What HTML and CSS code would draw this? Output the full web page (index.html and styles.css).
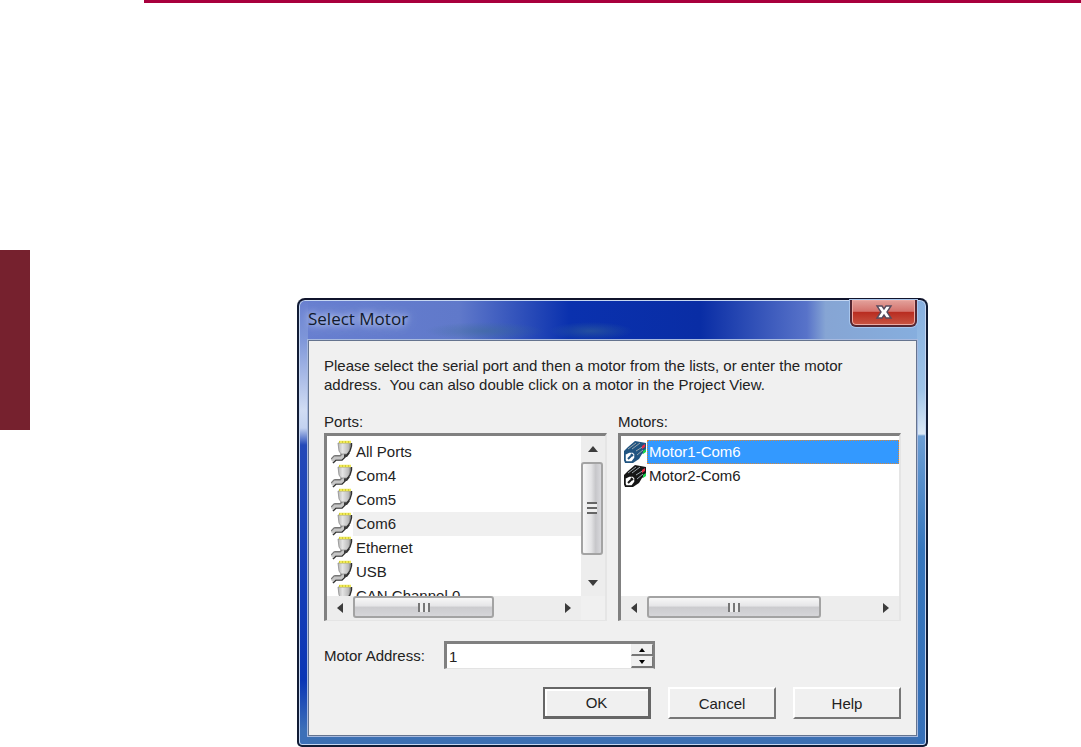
FILE: index.html
```html
<!DOCTYPE html>
<html lang="en">
<head>
<meta charset="utf-8">
<title>Select Motor</title>
<link rel="stylesheet" href="styles.css">
</head>
<body>
<svg class="defs" aria-hidden="true">
  <defs>
    <linearGradient id="metal"><stop offset="0" stop-color="#b5b5b5"/><stop offset=".35" stop-color="#e4e4e4"/><stop offset=".8" stop-color="#bcbcbc"/><stop offset="1" stop-color="#777"/></linearGradient>
    <symbol id="port" viewBox="0 0 22 24">
      <path d="M1 20L4 17H10L13 13V11" fill="none" stroke="#777" stroke-width="4" stroke-linejoin="round"/>
      <path d="M2 23L5 20H11L16 15V11" fill="none" stroke="#333" stroke-width="1.6"/>
      <path d="M1 21L4 18H10L13 15V11" fill="none" stroke="#c6c6c6" stroke-width="3"/>
      <path d="M13 13H19L16 17H13Z" fill="#3b3b3b"/>
      <path d="M7 3H20V5L18 12L16 14H10L8 11Z" fill="url(#metal)" stroke="#8d8d8d" stroke-width=".8"/>
      <path d="M20.500 3V6L19 11L16 15" fill="none" stroke="#303030" stroke-width="1.4"/>
      <path d="M8 2H20" stroke="#efe95a" stroke-width="2.5"/>
      <path d="M8 2H20" stroke="#c9c12c" stroke-width="1.5" stroke-dasharray="1 2"/>
    </symbol>
    <symbol id="motor" viewBox="0 0 24 24">
      <path d="M1 11L5 7L12 1L23 3V11L19 14L16 19L10 23H2L1 20Z" fill="currentColor"/>
      <path d="M5 9L13 3M9 9L17 3M13 11L21 6M14 15L20 10" stroke="#9aa5ac" stroke-width="1"/>
      <path d="M2 14L6 12H10L12 14V18L9 22H3L2 20Z" fill="#fff" stroke="currentColor" stroke-width="1.5"/>
      <path d="M5 19L9 15M8 14L10 16" stroke="currentColor" stroke-width="2"/>
      <path d="M19 6L22 4V7L19 9Z" fill="#e72c46"/><path d="M20 11L23 9V12L20 14Z" fill="#18d44d"/>
    </symbol>
    <symbol id="arrow" viewBox="0 0 10 10"><path d="M5 2L10 8H0Z" fill="#3c3c3c"/></symbol>
  </defs>
</svg>
<div class="page">
  <aside class="chapter-tab"></aside>
  <main class="sheet">
    <section class="dialog" role="dialog" aria-labelledby="title">
      <header class="titlebar">
        <h1 id="title" class="title">Select Motor</h1>
        <button class="close" type="button" aria-label="Close">
          <svg width="18" height="15" viewBox="0 0 18 15" aria-hidden="true"><path d="M2 1H7L9 4L11 1H16L12 7L16 13H11L9 10L7 13H2L6 7Z" fill="#fff" stroke="#574b5d" stroke-width="1.4"/></svg>
        </button>
      </header>
      <form class="client">
        <p class="intro">Please select the serial port and then a motor from the lists, or enter the motor<br>address.&nbsp; You can also double click on a motor in the Project View.</p>
        <div class="lists">
          <div class="group">
            <h2 id="ports-label" class="label">Ports:</h2>
            <div class="listbox with-vertical">
              <ul class="items" role="listbox" aria-labelledby="ports-label">
                <li class="item" role="option"><svg class="icon"><use href="#port"/></svg><span class="name">All Ports</span></li>
                <li class="item" role="option"><svg class="icon"><use href="#port"/></svg><span class="name">Com4</span></li>
                <li class="item" role="option"><svg class="icon"><use href="#port"/></svg><span class="name">Com5</span></li>
                <li class="item current" role="option" aria-selected="true"><svg class="icon"><use href="#port"/></svg><span class="name">Com6</span></li>
                <li class="item" role="option"><svg class="icon"><use href="#port"/></svg><span class="name">Ethernet</span></li>
                <li class="item" role="option"><svg class="icon"><use href="#port"/></svg><span class="name">USB</span></li>
                <li class="item" role="option"><svg class="icon"><use href="#port"/></svg><span class="name">CAN Channel 0</span></li>
              </ul>
              <div class="scroll vertical">
                <button class="step" type="button" aria-label="Scroll up"><svg class="arrow"><use href="#arrow"/></svg></button>
                <div class="track"><div class="thumb"><span class="grip"></span></div></div>
                <button class="step" type="button" aria-label="Scroll down"><svg class="arrow down"><use href="#arrow"/></svg></button>
              </div>
              <div class="scroll horizontal">
                <button class="step" type="button" aria-label="Scroll left"><svg class="arrow left"><use href="#arrow"/></svg></button>
                <div class="track"><div class="thumb"><span class="grip"></span></div></div>
                <button class="step" type="button" aria-label="Scroll right"><svg class="arrow right"><use href="#arrow"/></svg></button>
              </div>
            </div>
          </div>
          <div class="group">
            <h2 id="motors-label" class="label">Motors:</h2>
            <div class="listbox motors">
              <ul class="items" role="listbox" aria-labelledby="motors-label">
                <li class="item selected" role="option" aria-selected="true"><svg class="icon"><use href="#motor"/></svg><span class="name">Motor1-Com6</span></li>
                <li class="item" role="option"><svg class="icon"><use href="#motor"/></svg><span class="name">Motor2-Com6</span></li>
              </ul>
              <div class="scroll horizontal">
                <button class="step" type="button" aria-label="Scroll left"><svg class="arrow left"><use href="#arrow"/></svg></button>
                <div class="track"><div class="thumb"><span class="grip"></span></div></div>
                <button class="step" type="button" aria-label="Scroll right"><svg class="arrow right"><use href="#arrow"/></svg></button>
              </div>
            </div>
          </div>
        </div>
        <div class="address">
          <label for="address">Motor Address:</label>
          <div class="spinner">
            <input id="address" type="text" inputmode="numeric" value="1">
            <div class="spin-buttons">
              <button type="button" aria-label="Increase"><svg width="6" height="4" viewBox="0 0 6 4"><path d="M3 0L6 4H0Z"/></svg></button>
              <button type="button" aria-label="Decrease"><svg width="6" height="4" viewBox="0 0 6 4"><path d="M0 0H6L3 4Z"/></svg></button>
            </div>
          </div>
        </div>
        <div class="actions">
          <button class="button default" type="submit">OK</button>
          <button class="button" type="button">Cancel</button>
          <button class="button" type="button">Help</button>
        </div>
      </form>
    </section>
  </main>
</div>
</body>
</html>
```

FILE: styles.css
```css
* { box-sizing: border-box; }
body { margin: 0; background: #fff; color: #222; font: 15px/19px "Liberation Sans", Arial, sans-serif; }
button, input { font: inherit; color: inherit; margin: 0; padding: 0; }
h1, h2, p, ul { margin: 0; padding: 0; font-weight: normal; }
.defs { position: absolute; width: 0; height: 0; }

.page { display: flex; align-items: flex-start; }
.chapter-tab { flex: 0 0 30px; height: 180px; margin-top: 250px; background: #76212e; }
.sheet { flex: 1; margin-left: 114px; padding: 295px 153px 0; border-top: 3px solid #a8003d; }

.dialog {
  padding: 0 9px 9px;
  border: 2px solid #111c35;
  border-top-color: #10142c;
  border-radius: 8px 8px 5px 5px;
  background:
    linear-gradient(#687fd0, #7f97d9 40px, #d0dcf3 110px, #c3d2f0 128px, #2449b8 145px, #0a35b5 380px, #3d70b8 430px) left / 9px 100% no-repeat,
    linear-gradient(#86afdf, #9fc4e8 90px, #dce9f6 134px, #6c9ed4 136px, #3676bd 250px, #3770b8) right / 9px 100% no-repeat,
    radial-gradient(closest-side, #3d6d9380, transparent) 126px 22px / 120px 18px no-repeat,
    radial-gradient(closest-side, #3d6d9380, transparent) 250px 22px / 84px 18px no-repeat,
    linear-gradient(90deg, #687fd0, #6079ca 160px, #0a31ae 270px, #092da5 64%, #5873c9 81%, #86a5d4 84%, #86afdf) top / 100% 44px no-repeat,
    #3d70b3;
  box-shadow: inset 0 0 0 1px #c6d7f2;
}
.titlebar { display: flex; justify-content: space-between; align-items: flex-start; height: 40px; }
.title {
  margin-top: 7px;
  font: 17px/24px "Open Sans", "Noto Sans", sans-serif;
  color: #111a2c;
  text-shadow: 0 0 6px #dbe5fa, 0 0 12px #c4d1f2;
}
.close {
  display: grid; place-items: center;
  width: 67px; height: 27px;
  border: 2px solid #542631; border-top: 0; border-radius: 0 0 6px 6px;
  background: linear-gradient(#e3a29c, #d4736d 45%, #b92d21 50%, #c85543);
  box-shadow: inset 0 0 0 1px #edaaa3, 0 0 0 1px #a8c6ed;
}

.client { padding: 15px 15px 16px; border: 1px solid #65748f; background: #f0f0f0; outline: 1px solid #a8badf; }
.intro { min-height: 38px; }
.lists { display: grid; grid-template-columns: 1fr 1fr; gap: 11px; margin-top: 18px; }
.label { font-size: 15px; line-height: 19px; margin-bottom: 2px; }
.listbox {
  display: grid; grid-template: 1fr 24px / 1fr;
  height: 188px;
  border: 2px solid #808080; border-width: 3px 2px 1px 3px; border-right-color: #e5e5e5; border-bottom-color: #e5e5e5;
  background: #fff;
}
.with-vertical { grid-template-columns: 1fr 24px; background: #f0f0f0; }
.items { min-height: 0; overflow: hidden; list-style: none; background: #fff; padding: 4px 0 0 4px; }
.item { display: flex; align-items: center; height: 24px; }
.icon { flex: none; width: 22px; height: 24px; }
.name { flex: 1; align-self: stretch; padding-left: 3px; line-height: 24px; white-space: nowrap; }
.current .name { background: #f0f0f0; }
.motors .items { padding-left: 2px; }
.motors .icon { width: 24px; color: #161616; }
.motors .selected .icon { color: #205481; }
.motors .name { padding-left: 2px; }
.selected .name { background: #3399ff; color: #fff; outline: 1px dotted #d98738; outline-offset: -1px; }

.scroll { display: flex; background: #ededed; }
.vertical { flex-direction: column; width: 24px; }
.step { display: grid; place-items: center; flex: 0 0 26px; border: 0; background: transparent; }
.arrow { width: 10px; height: 10px; }
.down { transform: rotate(180deg); }
.left { transform: rotate(-90deg); }
.right { transform: rotate(90deg); }
.track { flex: 1; min-width: 0; min-height: 0; }
.thumb { display: grid; place-items: center; border: 2px solid #a3a3a3; border-radius: 3px; }
.vertical .thumb { width: 22px; height: 86%; background: linear-gradient(90deg, #f7f7f7, #e4e4e6 45%, #c7c7ca 70%, #d8d8dc); }
.horizontal .thumb { width: 70%; height: 22px; background: linear-gradient(#f7f7f7, #e5e5e7 45%, #cbcbce 50%, #d6d6d9); }
.motors .horizontal .thumb { width: 77%; }
.vertical .grip { width: 10px; height: 12px; background: repeating-linear-gradient(#666 0 2px, #eee 2px 5px); }
.horizontal .grip { width: 12px; height: 9px; background: repeating-linear-gradient(90deg, #777 0 2px, #eee 2px 5px); }

.address { display: flex; align-items: center; gap: 19px; margin-top: 20px; }
.spinner { display: flex; width: 211px; height: 28px; border: 3px solid #808080; border-width: 3px 2px 1px 3px; border-bottom-color: #e3e3e3; background: #fff; }
.spinner input { flex: 1; min-width: 0; padding-left: 2px; border: 0; background: #fff; outline: 0; }
.spin-buttons { display: grid; grid-template-rows: 1fr 1fr; width: 22px; }
.spin-buttons button { display: grid; place-items: center; min-height: 0; border: 1px solid #eee; border-right-color: #777; border-bottom: 2px solid #777; background: #f0f0f0; }
.actions { display: flex; justify-content: flex-end; gap: 17px; margin-top: 18px; }
.button { width: 108px; height: 32px; border: 2px solid #fff; border-right-color: #777; border-bottom-color: #777; background: #f0f0f0; }
.default { border: 2px solid #666; border-right-width: 3px; border-bottom-width: 3px; box-shadow: inset 2px 2px #fff; }
```
